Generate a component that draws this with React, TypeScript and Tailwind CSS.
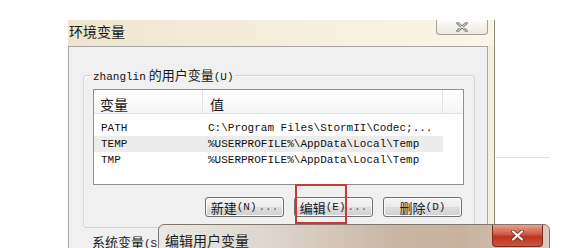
import React from 'react';

const mono = "font-['Liberation_Mono','Noto_Sans_CJK_SC',monospace]";

interface IVarRow {
  name: string;
  value: string;
  selected?: boolean;
}

const rows: IVarRow[] = [
  { name: 'PATH', value: 'C:\\Program Files\\StormII\\Codec;...' },
  { name: 'TEMP', value: '%USERPROFILE%\\AppData\\Local\\Temp', selected: true },
  { name: 'TMP', value: '%USERPROFILE%\\AppData\\Local\\Temp' },
];

function WinButton({ label, hotkey, dots }: { label: string; hotkey: string; dots?: boolean }) {
  return (
    <button className="flex h-[20px] w-[79px] items-center justify-center rounded-[3px] border border-[#707070] bg-[linear-gradient(180deg,#f4f4f4_0%,#ebebeb_50%,#dedede_51%,#d2d2d2_100%)] text-[#1a1a1a] shadow-[inset_0_0_0_1px_#fbfbfb]">
      <span className="text-[13px] leading-none">{label}</span>
      <span className={`${mono} text-[11px] leading-none`}>({hotkey})</span>
      {dots && <span className={`${mono} ml-[2px] text-[11px] leading-none text-[#555]`}>...</span>}
    </button>
  );
}

function InactiveClose() {
  return (
    <svg width="12" height="10" viewBox="0 0 12 10">
      <path d="M1.5 1 L10.5 9 M10.5 1 L1.5 9" stroke="#7c7c7c" strokeWidth="2.6" strokeLinecap="round" />
      <path d="M1.5 1 L10.5 9 M10.5 1 L1.5 9" stroke="#f4f4f4" strokeWidth="0.9" strokeLinecap="round" />
    </svg>
  );
}

function ActiveClose() {
  return (
    <svg width="13" height="11" viewBox="0 0 13 11">
      <path d="M2 1.5 L11 9.5 M11 1.5 L2 9.5" stroke="#6e2418" strokeWidth="3.6" strokeLinecap="round" />
      <path d="M2 1.5 L11 9.5 M11 1.5 L2 9.5" stroke="#ffffff" strokeWidth="2.2" strokeLinecap="round" />
    </svg>
  );
}

export default function App() {
  return (
    <div className="relative h-[248px] w-[578px] overflow-hidden bg-white pt-[20px] font-['Noto_Sans_CJK_SC',sans-serif] text-[#1a1a1a]">
      {/* 环境变量 window */}
      <div className="ml-[68px] flex w-[427px] flex-col border-r border-[#8e8a7c] bg-[#f6efdc]">
        <div className="flex h-[26px] items-start bg-[linear-gradient(90deg,#efe5cf_0%,#f5eedc_50%,#faf5e7_100%)]">
          <span className="pl-[1px] pt-[1px] text-[14px] leading-[20px]">环境变量</span>
          <div className="mr-[6px] ml-auto flex h-[15px] w-[52px] items-center justify-center rounded-b-[4px] border border-t-0 border-[#a29f96] bg-[linear-gradient(180deg,#fdfcf8,#ebe8df)]">
            <InactiveClose />
          </div>
        </div>

        <div className="flex">
          <div className="h-[202px] w-[420px] border-x border-t border-[#a6a6a6] bg-[#f0f0f0] pt-[28px] pl-[14px]">
            {/* user variables group */}
            <div className="relative h-[153px] w-[392px] rounded-[3px] border border-[#d5d5d5] pt-[13px] pl-[9px] shadow-[inset_1px_1px_0_#fafafa]">
              <span className="absolute -top-[9px] left-[8px] bg-[#f0f0f0] px-[1px] text-[13px] leading-[16px]">
                <span className={`${mono} text-[11px] text-[#111]`}>zhanglin</span> 的用户变量<span className={`${mono} text-[11px]`}>(U)</span>
              </span>

              <div className="h-[96px] w-[371px] border border-[#8f9090] bg-white">
                <div className="flex h-[24px] border-b border-[#e3e3e3] bg-[linear-gradient(180deg,#ffffff,#f4f5f6)] text-[14px]">
                  <div className="flex w-[109px] items-center border-r border-[#e2e2e2] pt-[5px] pl-[6px]">变量</div>
                  <div className="flex w-[240px] items-center border-r border-[#e2e2e2] pt-[5px] pl-[7px]">值</div>
                </div>
                <div className="pt-[6px]">
                  {rows.map((r) => (
                    <div
                      key={r.name}
                      className={`${mono} flex h-[16px] w-[349px] items-center text-[11px] text-[#111] ${r.selected ? 'bg-[#ececec]' : ''}`}
                    >
                      <span className="w-[109px] pl-[7px]">{r.name}</span>
                      <span className="pl-[5px] whitespace-nowrap">{r.value}</span>
                    </div>
                  ))}
                </div>
              </div>

              <div className="mt-[12px] flex w-[371px] justify-end gap-[10px] pr-[2px]">
                <WinButton label="新建" hotkey="N" dots />
                <WinButton label="编辑" hotkey="E" dots />
                <WinButton label="删除" hotkey="D" />
              </div>
            </div>

            <div className="mt-[6px] pl-[9px] text-[13px] leading-[16px]">
              系统变量<span className={`${mono} text-[11px]`}>(S)</span>
            </div>
          </div>
          <div className="w-[6px]" />
        </div>
      </div>

      {/* faint line of the desktop behind */}
      <div className="absolute top-[157px] left-[495px] h-px w-[55px] bg-[#e2e2e2]" />

      {/* red highlight round 编辑 */}
      <div className="absolute top-[184px] left-[295px] h-[40px] w-[52px] border-2 border-[#c63a3a]" />

      {/* 编辑用户变量 dialog */}
      <div className="absolute top-[224px] left-[158px] flex h-[30px] w-[392px] items-start rounded-t-[6px] border border-[#7f766d] bg-[linear-gradient(90deg,#ebe8e4_0%,#ddd4cb_30%,#cbb6a3_60%,#c9b19d_78%,#d8cbbf_100%)]">
        <span className="pt-[5px] pl-[6px] text-[14px] leading-[20px] text-[#1e1e1e]">编辑用户变量</span>
        <div className="mr-[6px] ml-auto flex h-[22px] w-[51px] items-center justify-center rounded-b-[4px] border border-t-0 border-[#7b2a1e] bg-[linear-gradient(180deg,#e7a08e_0%,#d0573f_45%,#bd3620_55%,#c9533a_100%)]">
          <ActiveClose />
        </div>
      </div>
    </div>
  );
}
